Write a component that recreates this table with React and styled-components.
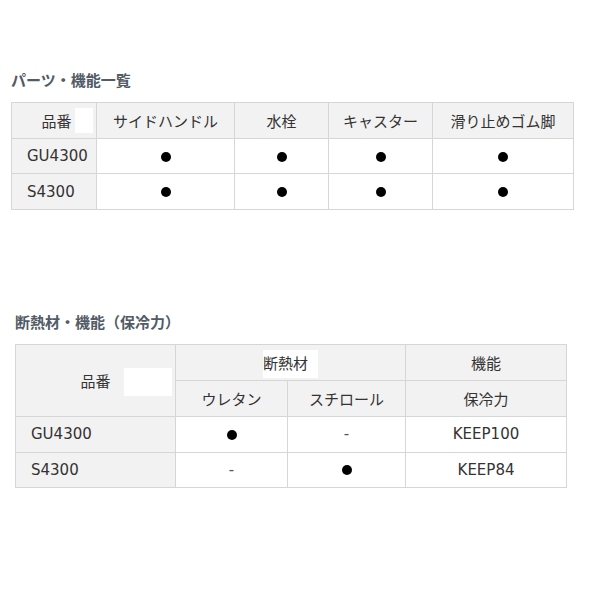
import React from "react";
import styled, { createGlobalStyle } from "styled-components";

const GlobalStyle = createGlobalStyle`
  body {
    margin: 0;
    background: #fff;
    font-family: "DejaVu Sans", "Noto Sans CJK JP", sans-serif;
    color: #333;
  }
`;

const Page = styled.div`
  width: 600px;
  height: 600px;
  padding-top: 70px;
  box-sizing: border-box;
`;

const Section = styled.section`
  margin-left: ${(p) => p.left}px;
  width: ${(p) => p.width}px;
  margin-bottom: ${(p) => p.gap || 0}px;
`;

const Title = styled.h3`
  margin: 0 0 ${(p) => p.below}px 0;
  font-family: "Noto Sans CJK JP", sans-serif;
  font-size: 15px;
  line-height: 20px;
  font-weight: 700;
  color: #525b66;
`;

const Table = styled.table`
  width: 100%;
  border-collapse: collapse;
  table-layout: fixed;
  font-size: 15px;
`;

const Row = styled.tr`
  height: ${(p) => p.h || 35.7}px;
`;

const Head = styled.th`
  position: relative;
  background: #f2f2f2;
  border: 1px solid #d6d6d6;
  font-weight: 400;
  text-align: center;
  padding: 0 0 0 ${(p) => p.pl || 0}px;
  color: #333;
`;

const Name = styled.td`
  background: #f2f2f2;
  border: 1px solid #d6d6d6;
  text-align: left;
  padding: 0 0 0 15px;
`;

const Cell = styled.td`
  border: 1px solid #d6d6d6;
  text-align: center;
  padding: 0;
`;

/* white patch left over on the original page, laid over the header cell */
const Mask = styled.span`
  position: absolute;
  background: #fff;
  left: ${(p) => p.x}px;
  top: ${(p) => p.y}px;
  width: ${(p) => p.w}px;
  height: ${(p) => p.h}px;
`;

const Masked = styled.span`
  background: #fff;
  padding: 5px 10px 5px 0;
`;

const Dot = styled.span`
  display: inline-block;
  width: 10px;
  height: 10px;
  border-radius: 50%;
  background: #000;
  vertical-align: middle;
`;

const Dash = styled.span`
  color: #555;
`;

const parts = [
  { name: "GU4300" },
  { name: "S4300" },
];

const insulation = [
  { name: "GU4300", urethane: true, styro: false, keep: "KEEP100" },
  { name: "S4300", urethane: false, styro: true, keep: "KEEP84" },
];

const Mark = ({ on }) => (on ? <Dot /> : <Dash>-</Dash>);

export default function App() {
  return (
    <Page>
      <GlobalStyle />
      <Section left={11} width={562} gap={102}>
        <Title below={12}>パーツ・機能一覧</Title>
        <Table>
          <colgroup>
            <col style={{ width: 85 }} />
            <col style={{ width: 138 }} />
            <col style={{ width: 94 }} />
            <col style={{ width: 104 }} />
            <col style={{ width: 141 }} />
          </colgroup>
          <thead>
            <Row>
              <Head pl={5}>
                品番
                <Mask x={63} y={5} w={18} h={25} />
              </Head>
              <Head>サイドハンドル</Head>
              <Head>水栓</Head>
              <Head>キャスター</Head>
              <Head>滑り止めゴム脚</Head>
            </Row>
          </thead>
          <tbody>
            {parts.map((p) => (
              <Row key={p.name}>
                <Name>{p.name}</Name>
                <Cell><Dot /></Cell>
                <Cell><Dot /></Cell>
                <Cell><Dot /></Cell>
                <Cell><Dot /></Cell>
              </Row>
            ))}
          </tbody>
        </Table>
      </Section>

      <Section left={15} width={551}>
        <Title below={12}>断熱材・機能（保冷力）</Title>
        <Table>
          <colgroup>
            <col style={{ width: 160 }} />
            <col style={{ width: 112 }} />
            <col style={{ width: 118 }} />
            <col style={{ width: 161 }} />
          </colgroup>
          <thead>
            <Row h={36}>
              <Head rowSpan={2}>
                品番
                <Mask x={108} y={23} w={48} h={28} />
              </Head>
              <Head colSpan={2}>
                <Masked>断熱材</Masked>
              </Head>
              <Head>機能</Head>
            </Row>
            <Row h={36}>
              <Head>ウレタン</Head>
              <Head>スチロール</Head>
              <Head>保冷力</Head>
            </Row>
          </thead>
          <tbody>
            {insulation.map((r) => (
              <Row key={r.name} h={35.5}>
                <Name>{r.name}</Name>
                <Cell><Mark on={r.urethane} /></Cell>
                <Cell><Mark on={r.styro} /></Cell>
                <Cell>{r.keep}</Cell>
              </Row>
            ))}
          </tbody>
        </Table>
      </Section>
    </Page>
  );
}
